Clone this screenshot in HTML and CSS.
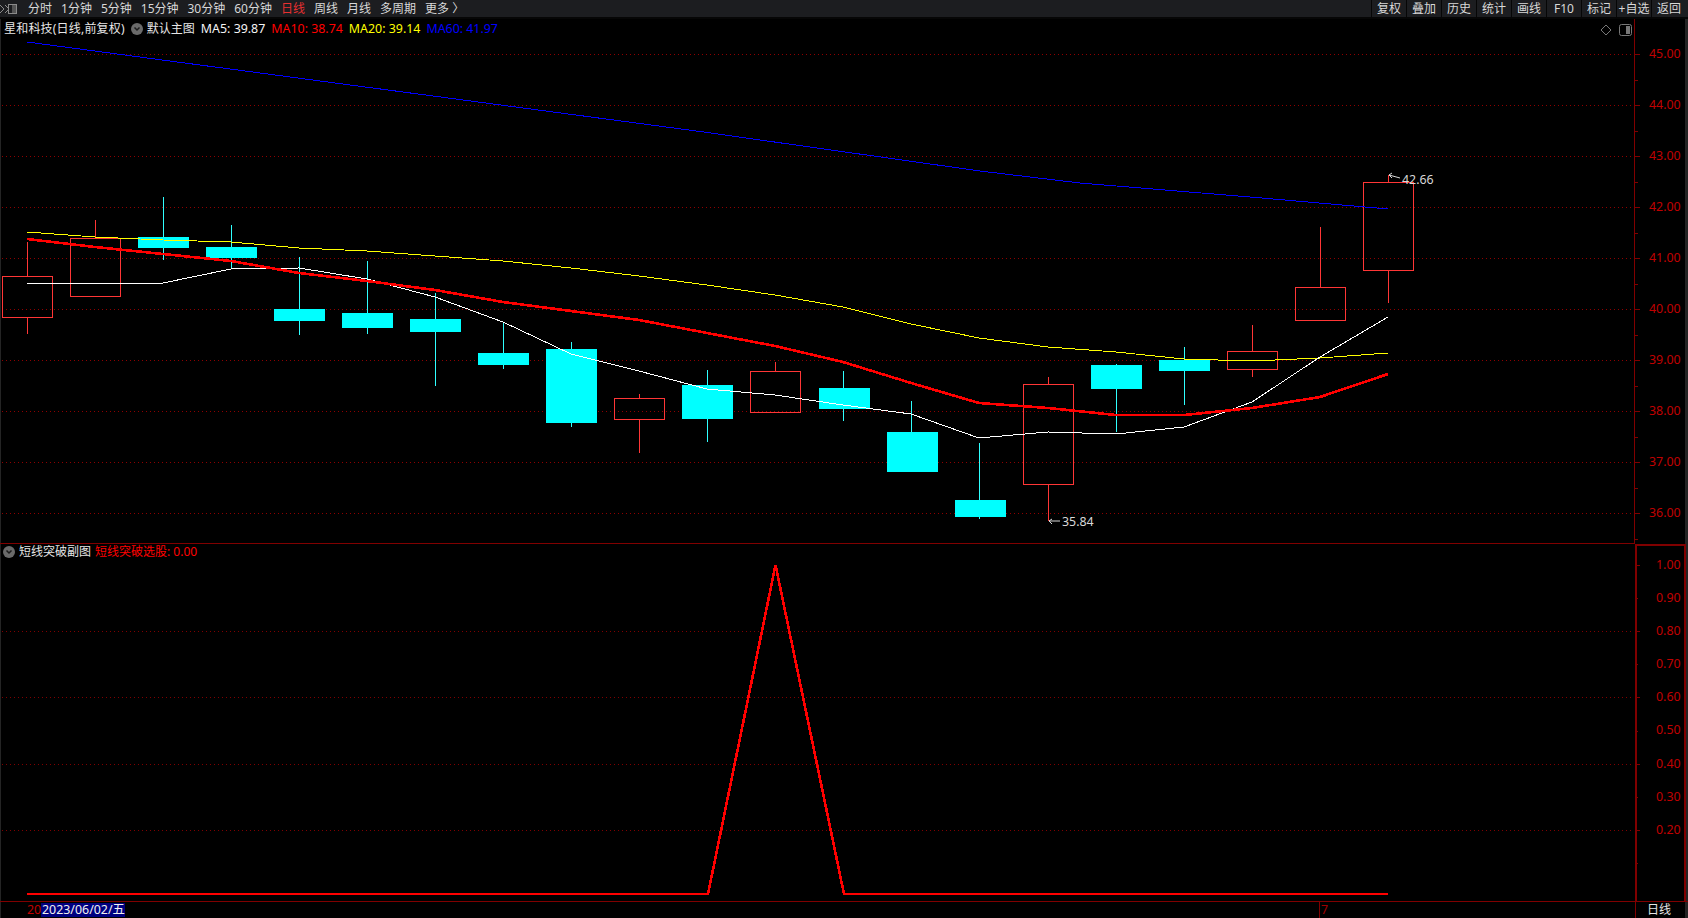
FILE: index.html
```html
<!DOCTYPE html>
<html lang="zh-CN">
<head>
<meta charset="utf-8">
<title>星和科技 日线</title>
<link rel="stylesheet" href="styles.css">
</head>
<body>
<div class="app">
  <header class="toolbar">
    <nav class="periods">
      <svg class="collapse" viewBox="0 0 18 10" width="18" height="10"><path class="collapse-arrow" d="M0 1 L4 5 L0 9 M5 1 L9 5 L5 9"/><rect class="collapse-box" x="8.500" y="0.500" width="8" height="9"/><rect class="collapse-fill" x="12" y="1" width="4" height="8"/></svg>
      <a class="period">分时</a>
      <a class="period">1分钟</a>
      <a class="period">5分钟</a>
      <a class="period">15分钟</a>
      <a class="period">30分钟</a>
      <a class="period">60分钟</a>
      <a class="period active">日线</a>
      <a class="period">周线</a>
      <a class="period">月线</a>
      <a class="period">多周期</a>
      <a class="period">更多 〉</a>
    </nav>
    <div class="tools">
      <a class="tool">复权</a>
      <a class="tool">叠加</a>
      <a class="tool">历史</a>
      <a class="tool">统计</a>
      <a class="tool">画线</a>
      <a class="tool">F10</a>
      <a class="tool">标记</a>
      <a class="tool">+自选</a>
      <a class="tool">返回</a>
    </div>
  </header>

  <section class="pane pane-main">
    <svg class="plot" viewBox="0 19 1688 524" width="1688" height="524">
      <g class="grid">
        <path d="M2 54.500H1634M2 105.500H1634M2 156.500H1634M2 207.500H1634M2 258.500H1634M2 309.500H1634M2 360.500H1634M2 411.500H1634M2 462.500H1634M2 513.500H1634"/>
      </g>
      <g class="axis">
        <path d="M1634.500 19V543"/>
        <path d="M1635 54.500H1640M1635 105.500H1640M1635 156.500H1640M1635 207.500H1640M1635 258.500H1640M1635 309.500H1640M1635 360.500H1640M1635 411.500H1640M1635 462.500H1640M1635 513.500H1640"/>
        <path d="M1635 80.500H1638M1635 131.500H1638M1635 182.500H1638M1635 233.500H1638M1635 284.500H1638M1635 335.500H1638M1635 386.500H1638M1635 437.500H1638M1635 488.500H1638M1635 539.500H1638"/>
      </g>
      <g class="axis-labels">
        <text x="1649" y="58">45.00</text>
        <text x="1649" y="109">44.00</text>
        <text x="1649" y="160">43.00</text>
        <text x="1649" y="211">42.00</text>
        <text x="1649" y="262">41.00</text>
        <text x="1649" y="313">40.00</text>
        <text x="1649" y="364">39.00</text>
        <text x="1649" y="415">38.00</text>
        <text x="1649" y="466">37.00</text>
        <text x="1649" y="517">36.00</text>
      </g>
      <g class="up">
        <rect x="2.500" y="276.500" width="50" height="41"/><path d="M27.500 242V276M27.500 318V334"/>
        <rect x="70.500" y="238.500" width="50" height="58"/><path d="M95.500 220V238"/>
        <rect x="614.500" y="398.500" width="50" height="21"/><path d="M639.500 394V398M639.500 420V453"/>
        <rect x="750.500" y="371.500" width="50" height="41"/><path d="M775.500 362V371"/>
        <rect x="1023.500" y="384.500" width="50" height="100"/><path d="M1048.500 377V384M1048.500 485V521"/>
        <rect x="1227.500" y="351.500" width="50" height="18"/><path d="M1252.500 325V351M1252.500 370V377"/>
        <rect x="1295.500" y="287.500" width="50" height="33"/><path d="M1320.500 227V287"/>
        <rect x="1363.500" y="182.500" width="50" height="88"/><path d="M1388.500 175V182M1388.500 271V303"/>
      </g>
      <g class="down">
        <path d="M163.500 197V260M231.500 225V269M299.500 257V335M367.500 261V334M435.500 293V386M503.500 323V369M571.500 342V427M707.500 370V442M843.500 371V421M911.500 401V432M979.500 443V519M1116.500 364V432M1184.500 347V405"/>
        <rect x="138" y="237" width="51" height="11"/>
        <rect x="206" y="247" width="51" height="11"/>
        <rect x="274" y="309" width="51" height="12"/>
        <rect x="342" y="313" width="51" height="15"/>
        <rect x="410" y="319" width="51" height="13"/>
        <rect x="478" y="353" width="51" height="12"/>
        <rect x="546" y="349" width="51" height="74"/>
        <rect x="682" y="385" width="51" height="34"/>
        <rect x="819" y="388" width="51" height="21"/>
        <rect x="887" y="432" width="51" height="40"/>
        <rect x="955" y="500" width="51" height="17"/>
        <rect x="1091" y="365" width="51" height="24"/>
        <rect x="1159" y="360" width="51" height="11"/>
      </g>
      <polyline class="ma ma60" points="27,42 700,131.500 980,171 1080,183 1250,197 1388,209"/>
      <polyline class="ma ma20" points="27,232 95,237 163,240 231,242 299,248 367,251 435,256 503,261 571,268 639,276 707,285 775,295 843,307 911,324 979,338 1048,347 1116,352 1184,359 1252,361 1320,358 1388,353"/>
      <polyline class="ma ma5" points="27,283 95,283 163,283 231,269 299,268 367,279 435,297 503,322 571,354 639,371 707,389 775,395 843,405 911,414 979,438 1048,432 1116,434 1184,427 1252,402 1320,357 1388,317"/>
      <polyline class="ma ma10" points="27,239 95,247 163,254 231,261 299,273 367,281 435,290 503,302 571,311 639,320 707,333 775,346 843,362 911,383 979,403 1048,408 1116,415 1184,415 1252,408 1320,397 1388,374"/>
      <g class="mark">
        <path d="M1389 175L1400 178M1389 175L1392 173M1389 175L1392 178"/>
        <path d="M1049 521H1060M1049 521L1052 519M1049 521L1052 524"/>
        <text x="1402" y="184">42.66</text>
        <text x="1062" y="526">35.84</text>
      </g>
      <g class="corner">
        <path d="M1606 25L1611 30L1606 35L1601 30Z"/>
        <rect x="1619.500" y="24.500" width="12" height="11" rx="2"/>
        <rect class="corner-fill" x="1626" y="26" width="4" height="8"/>
      </g>
    </svg>
    <div class="legend legend-main">
      <span class="name name-stock">星和科技(日线,前复权)</span>
      <svg class="badge" viewBox="0 0 12 12" width="12" height="12"><circle cx="6" cy="6" r="6"/><path d="M3.500 4.500L6 7L8.500 4.500"/></svg>
      <span class="name">默认主图</span>
      <span class="val v5">MA5: 39.87</span>
      <span class="val v10">MA10: 38.74</span>
      <span class="val v20">MA20: 39.14</span>
      <span class="val v60">MA60: 41.97</span>
    </div>
  </section>

  <section class="pane pane-sub">
    <svg class="plot" viewBox="0 543 1688 358" width="1688" height="358">
      <g class="grid grid-sub">
        <path d="M2 631.500H1634M2 697.500H1634M2 764.500H1634M2 830.500H1634"/>
      </g>
      <g class="axis">
        <path d="M0 543.500H1635"/>
        <path class="axis-heavy" d="M1636 901V545H1684.500V901"/>
        <path d="M1637 565.500H1640M1637 631.500H1640M1637 697.500H1640M1637 764.500H1640M1637 830.500H1640"/>
        <path d="M1637 598.500H1638M1637 664.500H1638M1637 731.500H1638M1637 797.500H1638M1637 863.500H1638"/>
      </g>
      <g class="axis-labels">
        <text x="1656" y="569">1.00</text>
        <text x="1656" y="602">0.90</text>
        <text x="1656" y="635">0.80</text>
        <text x="1656" y="668">0.70</text>
        <text x="1656" y="701">0.60</text>
        <text x="1656" y="734">0.50</text>
        <text x="1656" y="768">0.40</text>
        <text x="1656" y="801">0.30</text>
        <text x="1656" y="834">0.20</text>
      </g>
      <polyline class="ma ma10" points="27,894 708,894 775.500,565 844,894 1388,894"/>
    </svg>
    <div class="legend legend-sub">
      <svg class="badge" viewBox="0 0 12 12" width="12" height="12"><circle cx="6" cy="6" r="6"/><path d="M3.500 4.500L6 7L8.500 4.500"/></svg>
      <span class="name">短线突破副图</span>
      <span class="val v10">短线突破选股: 0.00</span>
    </div>
  </section>

  <footer class="timeline">
    <div class="dates">
      <span class="date-prefix">20</span><span class="date-cursor">2023/06/02/五</span>
      <span class="month-tick">7</span>
    </div>
    <div class="cycle">日线</div>
  </footer>
</div>
</body>
</html>
```
FILE: styles.css
```css
* { box-sizing: border-box; }
html, body { margin: 0; padding: 0; background: #000; }
body {
  width: 1688px;
  height: 918px;
  overflow: hidden;
  font-family: "Noto Sans", "Noto Sans CJK SC", sans-serif;
  font-size: 12px;
  color: #d8d8d8;
}
.app {
  display: flex;
  flex-direction: column;
  height: 918px;
  border-left: 1px solid #242424;
  border-right: 3px solid #242424;
}

/* toolbar */
.toolbar {
  display: flex;
  justify-content: space-between;
  align-items: stretch;
  height: 19px;
  margin-left: -1px;
  margin-right: -3px;
  background: #1c1d20;
  border-bottom: 2px solid #060606;
  line-height: 18px;
}
.periods { display: flex; align-items: center; }
.collapse { margin: 0 10px 0 0; flex: none; }
.collapse-arrow { fill: none; stroke: #8a8a8a; stroke-width: 1; }
.collapse-box { fill: none; stroke: #8a8a8a; }
.collapse-fill { fill: #555; }
.period { margin-right: 9px; color: #d8d8d8; white-space: nowrap; }
.period.active { color: #e83030; }
.tools { display: flex; padding-right: 2px; }
.tool {
  width: 35px;
  text-align: center;
  border-left: 1px solid #060606;
  color: #d8d8d8;
  white-space: nowrap;
}

/* panes */
.pane { position: relative; margin-left: -1px; margin-right: -3px; }
.pane-main { height: 524px; }
.pane-sub { height: 358px; }
.plot { display: block; }
.legend {
  position: absolute;
  left: 4px;
  display: flex;
  align-items: center;
  white-space: nowrap;
  height: 16px;
  line-height: 16px;
}
.legend-main { top: 2px; }
.legend-sub { top: 1px; left: 3px; }
.legend .name { color: #e6e6e6; }
.legend .name-stock { letter-spacing: 0.2px; }
.badge { margin: 0 4px 0 6px; flex: none; }
.legend-sub .badge { margin: 0 4px 0 0; }
.badge circle { fill: #6a6a6a; }
.badge path { fill: none; stroke: #1c1c1c; stroke-width: 1.500; }
.val { margin-left: 6px; font-size: 12.4px; }
.legend-sub .val { margin-left: 4px; font-size: 12px; }
.v5 { color: #f4f4f4; }
.v10 { color: #ff0000; }
.v20 { color: #ffff00; }
.v60 { color: #0000ff; }

/* chart */
.grid path {
  fill: none;
  stroke: #8f0000;
  stroke-width: 1;
  stroke-dasharray: 1 3;
  shape-rendering: crispEdges;
}
.grid-sub path { stroke: #800000; }
.axis path {
  fill: none;
  stroke: #800000;
  stroke-width: 1;
  shape-rendering: crispEdges;
}
.axis .axis-heavy { stroke-width: 2; }
.axis-labels text {
  fill: #c00000;
  font-size: 12.4px;
}
.up rect, .up path {
  fill: none;
  stroke: #ff3636;
  stroke-width: 1;
  shape-rendering: crispEdges;
}
.down rect { fill: #00ffff; shape-rendering: crispEdges; }
.down path {
  fill: none;
  stroke: #30ffff;
  stroke-width: 1;
  shape-rendering: crispEdges;
}
.ma { fill: none; stroke-width: 1; shape-rendering: crispEdges; }
.ma5 { stroke: #ffffff; }
.ma10 { stroke: #ff0000; stroke-width: 2.600; }
.ma20 { stroke: #ffff00; }
.ma60 { stroke: #0000ff; }
.mark path { fill: none; stroke: #d8d8d8; stroke-width: 1; }
.mark text { fill: #d8d8d8; font-size: 12.4px; }
.corner path, .corner rect { fill: none; stroke: #777; stroke-width: 1; }
.corner .corner-fill { fill: #777; stroke: none; }

/* time axis */
.timeline {
  display: flex;
  height: 17px;
  margin-left: -1px;
  margin-right: -3px;
  border-top: 1px solid #800000;
}
.dates {
  position: relative;
  display: flex;
  width: 1635px;
  padding: 1px 0 0 27px;
  line-height: 14px;
  font-size: 12.4px;
}
.date-prefix { color: #c00000; width: 14px; white-space: nowrap; }
.date-cursor { background: #000080; color: #f0f0f0; width: 84px; height: 14px; padding-left: 1px; white-space: nowrap; }
.month-tick {
  position: absolute;
  left: 1319px;
  top: 0;
  height: 16px;
  padding-left: 1px;
  border-left: 1px solid #800000;
  color: #a00000;
  line-height: 15px;
}
.cycle {
  width: 49px;
  padding-right: 2px;
  border-left: 1px solid #800000;
  text-align: center;
  color: #e6e6e6;
  line-height: 15px;
}
```
